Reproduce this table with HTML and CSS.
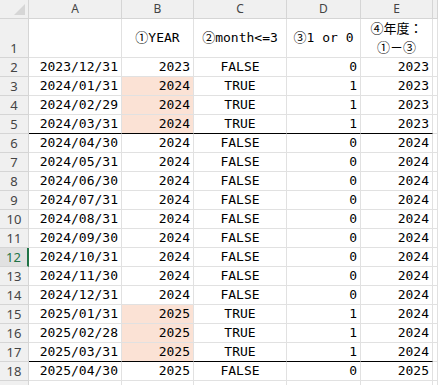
FILE: index.html
```html
<!DOCTYPE html>
<html>
<head>
<meta charset="utf-8">
<link rel="stylesheet" href="styles.css">
</head>
<body>
<div class="sheet">
  <div class="row hdr">
    <div class="rh corner"><span class="tri"></span></div>
    <div class="ch">A</div><div class="ch">B</div><div class="ch">C</div><div class="ch">D</div><div class="ch">E</div><div class="ch last"></div>
  </div>
  <div class="row r1">
    <div class="rh">1</div>
    <div class="c"></div>
    <div class="c ctr">①YEAR</div>
    <div class="c ctr">②month&lt;=3</div>
    <div class="c ctr">③1 or 0</div>
    <div class="c ctr wrap">④年度：<br>①－③</div>
    <div class="c last"></div>
  </div>
  <div class="row"><div class="rh">2</div><div class="c rt">2023/12/31</div><div class="c rt">2023</div><div class="c mid">FALSE</div><div class="c rt">0</div><div class="c rt">2023</div><div class="c last"></div></div>
  <div class="row"><div class="rh">3</div><div class="c rt">2024/01/31</div><div class="c rt hl">2024</div><div class="c mid">TRUE</div><div class="c rt">1</div><div class="c rt">2023</div><div class="c last"></div></div>
  <div class="row"><div class="rh">4</div><div class="c rt">2024/02/29</div><div class="c rt hl">2024</div><div class="c mid">TRUE</div><div class="c rt">1</div><div class="c rt">2023</div><div class="c last"></div></div>
  <div class="row thick"><div class="rh">5</div><div class="c rt">2024/03/31</div><div class="c rt hl">2024</div><div class="c mid">TRUE</div><div class="c rt">1</div><div class="c rt">2023</div><div class="c last"></div></div>
  <div class="row"><div class="rh">6</div><div class="c rt">2024/04/30</div><div class="c rt">2024</div><div class="c mid">FALSE</div><div class="c rt">0</div><div class="c rt">2024</div><div class="c last"></div></div>
  <div class="row"><div class="rh">7</div><div class="c rt">2024/05/31</div><div class="c rt">2024</div><div class="c mid">FALSE</div><div class="c rt">0</div><div class="c rt">2024</div><div class="c last"></div></div>
  <div class="row"><div class="rh">8</div><div class="c rt">2024/06/30</div><div class="c rt">2024</div><div class="c mid">FALSE</div><div class="c rt">0</div><div class="c rt">2024</div><div class="c last"></div></div>
  <div class="row"><div class="rh">9</div><div class="c rt">2024/07/31</div><div class="c rt">2024</div><div class="c mid">FALSE</div><div class="c rt">0</div><div class="c rt">2024</div><div class="c last"></div></div>
  <div class="row"><div class="rh">10</div><div class="c rt">2024/08/31</div><div class="c rt">2024</div><div class="c mid">FALSE</div><div class="c rt">0</div><div class="c rt">2024</div><div class="c last"></div></div>
  <div class="row"><div class="rh">11</div><div class="c rt">2024/09/30</div><div class="c rt">2024</div><div class="c mid">FALSE</div><div class="c rt">0</div><div class="c rt">2024</div><div class="c last"></div></div>
  <div class="row"><div class="rh sel">12</div><div class="c rt">2024/10/31</div><div class="c rt">2024</div><div class="c mid">FALSE</div><div class="c rt">0</div><div class="c rt">2024</div><div class="c last"></div></div>
  <div class="row"><div class="rh">13</div><div class="c rt">2024/11/30</div><div class="c rt">2024</div><div class="c mid">FALSE</div><div class="c rt">0</div><div class="c rt">2024</div><div class="c last"></div></div>
  <div class="row"><div class="rh">14</div><div class="c rt">2024/12/31</div><div class="c rt">2024</div><div class="c mid">FALSE</div><div class="c rt">0</div><div class="c rt">2024</div><div class="c last"></div></div>
  <div class="row"><div class="rh">15</div><div class="c rt">2025/01/31</div><div class="c rt hl">2025</div><div class="c mid">TRUE</div><div class="c rt">1</div><div class="c rt">2024</div><div class="c last"></div></div>
  <div class="row"><div class="rh">16</div><div class="c rt">2025/02/28</div><div class="c rt hl">2025</div><div class="c mid">TRUE</div><div class="c rt">1</div><div class="c rt">2024</div><div class="c last"></div></div>
  <div class="row thick"><div class="rh">17</div><div class="c rt">2025/03/31</div><div class="c rt hl">2025</div><div class="c mid">TRUE</div><div class="c rt">1</div><div class="c rt">2024</div><div class="c last"></div></div>
  <div class="row"><div class="rh">18</div><div class="c rt">2025/04/30</div><div class="c rt">2025</div><div class="c mid">FALSE</div><div class="c rt">0</div><div class="c rt">2025</div><div class="c last"></div></div>
  <div class="row"><div class="rh"></div><div class="c"></div><div class="c"></div><div class="c"></div><div class="c"></div><div class="c"></div><div class="c last"></div></div>
</div>
</body>
</html>
```
FILE: styles.css
```css
html, body { margin: 0; padding: 0; background: #fff; }
.sheet {
  width: 438px;
  height: 385px;
  overflow: hidden;
  font-family: "DejaVu Sans Mono", "Noto Sans CJK JP", monospace;
  font-size: 13px;
  color: #000;
}
.row {
  display: grid;
  grid-template-columns: 29px 93px 72px 93px 74px 72px 1fr;
  height: 19px;
}
.row > div {
  box-sizing: border-box;
  border-right: 1px solid #e1e1e1;
  border-bottom: 1px solid #e1e1e1;
  display: flex;
  align-items: flex-end;
  line-height: 16px;
  padding-bottom: 1px;
  white-space: nowrap;
  overflow: hidden;
}
.row.r1 { height: 39px; }
.row.r1 > div { align-items: center; padding-bottom: 0; }
.row.thick > .c:not(.last) { border-bottom-color: #000; }
.hdr > div {
  background: #f0f0f0;
  border-right-color: #d5d5d5;
  border-bottom-color: #d5d5d5;
  justify-content: center;
  align-items: center;
  padding: 0;
  font-family: "Noto Sans", "Liberation Sans", sans-serif;
  font-size: 12px;
  color: #444;
}
.corner { position: relative; }
.tri {
  position: absolute;
  right: 3px;
  bottom: 3px;
  width: 0; height: 0;
  border-left: 11px solid transparent;
  border-bottom: 11px solid #d6d6d6;
}
.rh {
  background: #f0f0f0;
  border-right-color: #d5d5d5 !important;
  border-bottom-color: #d5d5d5 !important;
  justify-content: center;
  font-family: "Noto Sans", "Liberation Sans", sans-serif;
  font-size: 13px;
  color: #444;
}
.row.r1 > .rh { align-items: flex-end; padding-bottom: 1px; }
.rh.sel {
  background: #e1e1e1;
  color: #217346;
  border-right: 2px solid #217346 !important;
}
.c.rt { justify-content: flex-end; padding-right: 3px; }
.c.mid { justify-content: center; }
.c.ctr { justify-content: center; text-align: center; }
.c.wrap { white-space: normal; line-height: 19px; }
.c.hl { background: #fbe2d5; }
```
